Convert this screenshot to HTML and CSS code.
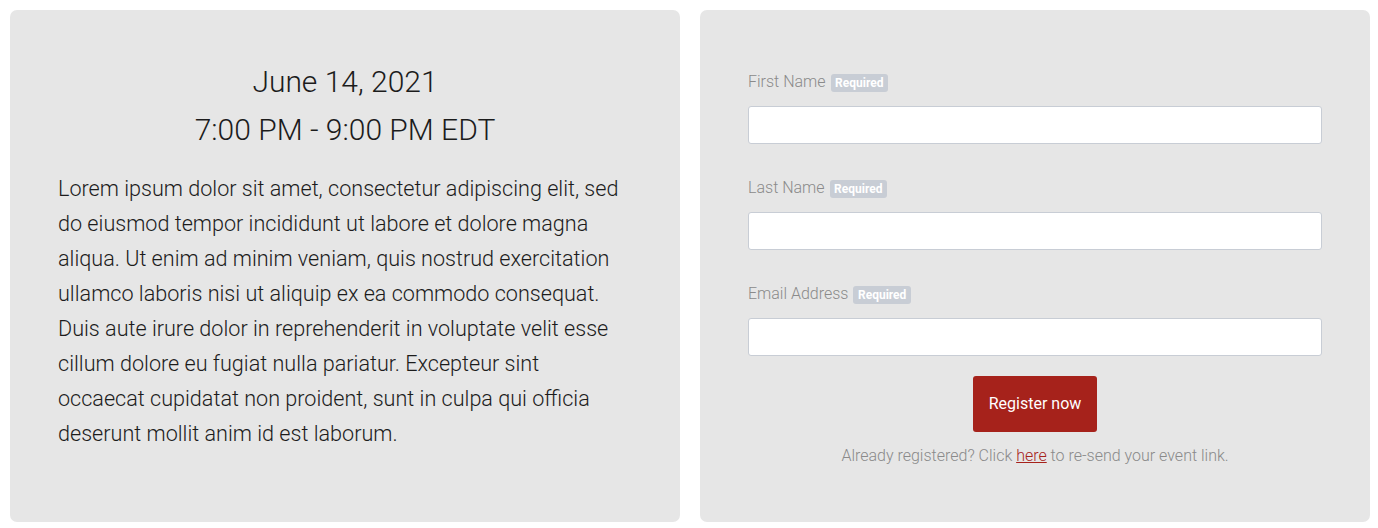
FILE: index.html
```html
<!DOCTYPE html>
<html lang="en">
<head>
<meta charset="utf-8">
<title>Event Registration</title>
<link rel="stylesheet" href="styles.css">
</head>
<body>
<main class="layout">
  <section class="card card-info">
    <div class="when">
      <div class="when-date">June 14, 2021</div>
      <div class="when-time">7:00 PM - 9:00 PM EDT</div>
    </div>
    <p class="description">Lorem ipsum dolor sit amet, consectetur adipiscing elit, sed do eiusmod tempor incididunt ut labore et dolore magna aliqua. Ut enim ad minim veniam, quis nostrud exercitation ullamco laboris nisi ut aliquip ex ea commodo consequat. Duis aute irure dolor in reprehenderit in voluptate velit esse cillum dolore eu fugiat nulla pariatur. Excepteur sint occaecat cupidatat non proident, sunt in culpa qui officia deserunt mollit anim id est laborum.</p>
  </section>
  <section class="card card-form">
    <form class="form">
      <div class="field">
        <label class="field-label" for="first">First Name <span class="badge">Required</span></label>
        <input class="field-input" id="first" type="text">
      </div>
      <div class="field">
        <label class="field-label" for="last">Last Name <span class="badge">Required</span></label>
        <input class="field-input" id="last" type="text">
      </div>
      <div class="field">
        <label class="field-label" for="email">Email Address <span class="badge">Required</span></label>
        <input class="field-input" id="email" type="email">
      </div>
      <button class="btn-register" type="button">Register now</button>
      <p class="resend">Already registered? Click <a class="resend-link" href="#">here</a> to re-send your event link.</p>
    </form>
  </section>
</main>
</body>
</html>
```

FILE: styles.css
```css
* { box-sizing: border-box; }
html, body { margin: 0; padding: 0; background: #ffffff; }
body {
  font-family: Roboto, "Liberation Sans", sans-serif;
  font-weight: 300;
  color: #1c1c1c;
}
.layout {
  display: flex;
  gap: 20px;
  padding: 10px;
}
.card {
  flex: 0 0 670px;
  width: 670px;
  background: #e6e6e6;
  border-radius: 7px;
  height: 512px;
}
.card-info {
  padding: 48px 55px 0 48px;
}
.when {
  text-align: center;
  font-size: 30px;
  line-height: 48px;
  color: #1c1c1c;
  margin-bottom: 17px;
  margin-right: -7px;
}
.description {
  margin: 0;
  font-size: 21.6px;
  line-height: 35px;
  color: #1c1c1c;
}
.card-form {
  padding: 60px 48px 0 48px;
}
.form {
  display: flex;
  flex-direction: column;
}
.field {
  display: flex;
  flex-direction: column;
  margin-bottom: 32px;
}
.field:nth-of-type(3) { margin-bottom: 20px; }
.field-label {
  font-size: 16px;
  line-height: 24px;
  color: #8a8a8a;
  margin-bottom: 12px;
  display: flex;
  align-items: center;
  gap: 5px;
}
.badge {
  display: inline-block;
  background: #c8cdd5;
  color: #ffffff;
  font-weight: 700;
  font-size: 12px;
  line-height: 18px;
  padding: 0 4.5px;
  border-radius: 3px;
  margin-top: 1px;
}
.field-input {
  height: 38px;
  width: 100%;
  border: 1px solid #c8cdd5;
  border-radius: 3px;
  background: #ffffff;
  font: inherit;
  padding: 0 10px;
}
.btn-register {
  align-self: center;
  background: #a6221b;
  color: #ffffff;
  border: none;
  border-radius: 3px;
  font-family: Roboto, "Liberation Sans", sans-serif;
  font-weight: 400;
  font-size: 16px;
  line-height: 24px;
  padding: 16px 16px;
  cursor: pointer;
}
.resend {
  margin: 12px 0 0 0;
  text-align: center;
  font-size: 16px;
  line-height: 24px;
  color: #8a8a8a;
}
.resend-link {
  color: #a6221b;
  text-decoration: underline;
}
```
